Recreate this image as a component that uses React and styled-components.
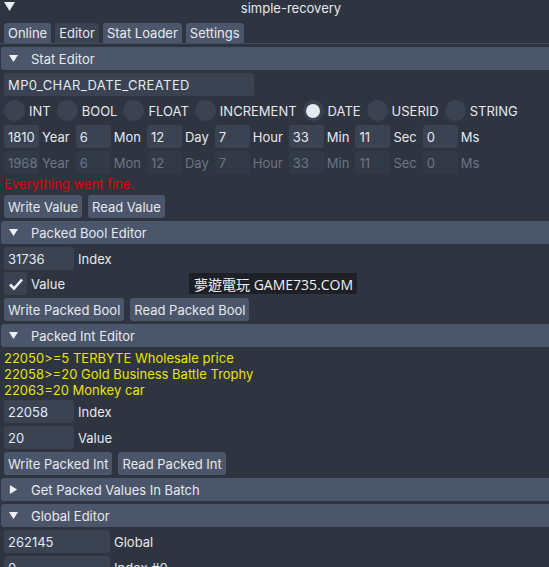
import React from 'react';
import styled, { createGlobalStyle } from 'styled-components';

const GlobalStyle = createGlobalStyle`
  html, body {
    margin: 0;
    padding: 0;
    background: #2e3440;
  }
  body {
    font-family: Inter, "Noto Sans", sans-serif;
    font-size: 13px;
    color: #e5e9f0;
  }
`;

const Window = styled.div`
  position: relative;
  width: 549px;
  height: 567px;
  overflow: hidden;
  background: #2e3440;
`;

const TitleBar = styled.div`
  height: 17px;
  display: flex;
  align-items: flex-start;
  padding: 1px 0 0 4px;
  box-sizing: border-box;
`;

const Title = styled.div`
  flex: 1;
  text-align: center;
  padding-left: 18px;
  line-height: 14px;
`;

const TabBar = styled.div`
  display: flex;
  gap: 4px;
  padding: 0 4px;
  margin-top: 6px;
  height: 20px;
  border-bottom: 1px solid #434c5e;
`;

const Tab = styled.div`
  height: 20px;
  padding: 0 4px;
  display: flex;
  align-items: center;
  border-radius: 3px 3px 0 0;
  background: ${p => (p.$active ? '#3b4252' : '#4c566a')};
`;

const Content = styled.div`
  display: flex;
  flex-direction: column;
  gap: 3px;
  padding: 3px 0 0 4px;
`;

const Header = styled.div`
  height: 23px;
  margin-left: -3px;
  display: flex;
  align-items: center;
  gap: 13px;
  padding-left: 8px;
  border-radius: 3px 0 0 3px;
  background: #4c566a;
`;

const Row = styled.div`
  display: flex;
  align-items: center;
  height: 23px;
  gap: ${p => p.$gap || 6}px;
`;

const Field = styled.div`
  height: 23px;
  width: ${p => p.$w}px;
  box-sizing: border-box;
  padding: 0 4px;
  display: flex;
  align-items: center;
  border-radius: 3px;
  letter-spacing: ${p => p.$ls || 0}px;
  background: ${p => (p.$dim ? '#333a47' : '#3b4252')};
  color: ${p => (p.$dim ? '#6c7586' : '#e5e9f0')};
  flex-shrink: 0;
`;

const Labeled = styled.div`
  display: flex;
  align-items: center;
  gap: ${p => p.$gap || 4}px;
  margin-top: ${p => p.$mt || 0}px;
  color: ${p => (p.$dim ? '#6c7586' : '#e5e9f0')};
`;

const Radio = styled.div`
  width: 21px;
  height: 21px;
  border-radius: 50%;
  background: #3b4252;
  display: flex;
  align-items: center;
  justify-content: center;
  &::after {
    content: '';
    display: ${p => (p.$on ? 'block' : 'none')};
    width: 14px;
    height: 14px;
    border-radius: 50%;
    background: #e5e9f0;
  }
`;

const Check = styled.div`
  width: 23px;
  height: 23px;
  border-radius: 3px;
  background: #3b4252;
  display: flex;
  align-items: center;
  justify-content: center;
`;

const Button = styled.div`
  height: 23px;
  padding: 0 4px;
  display: flex;
  align-items: center;
  border-radius: 3px;
  background: #4c566a;
`;

const Text = styled.div`
  line-height: ${p => p.$lh || 16}px;
  color: ${p => p.$color || '#e5e9f0'};
`;

const Notes = styled.div`
  margin-bottom: -1px;
`;

const Watermark = styled.div`
  position: absolute;
  left: 189px;
  top: 273px;
  height: 21px;
  padding: 0 4px 0 5px;
  display: flex;
  align-items: center;
  background: #1e2028;
  color: #f0f0f0;
  font-family: "Open Sans", "Noto Sans CJK TC", sans-serif;
  font-size: 14px;
`;

const Tri = ({ down = true, size = 9 }) => (
  <svg width={size} height={size} viewBox="0 0 10 10">
    {down ? <polygon points="0,1 10,1 5,9" fill="#eceff4" /> : <polygon points="1,0 9,5 1,10" fill="#eceff4" />}
  </svg>
);

const Section = ({ title, open = true }) => (
  <Header>
    <Tri down={open} />
    <span>{title}</span>
  </Header>
);

const dateParts = [
  ['1810', 'Year'],
  ['6', 'Mon'],
  ['12', 'Day'],
  ['7', 'Hour'],
  ['33', 'Min'],
  ['11', 'Sec'],
  ['0', 'Ms'],
];
const dateParts2 = [
  ['1968', 'Year'],
  ['6', 'Mon'],
  ['12', 'Day'],
  ['7', 'Hour'],
  ['33', 'Min'],
  ['11', 'Sec'],
  ['0', 'Ms'],
];

const types = ['INT', 'BOOL', 'FLOAT', 'INCREMENT', 'DATE', 'USERID', 'STRING'];

const DateRow = ({ parts, dim }) => (
  <Row $gap={6}>
    {parts.map(([v, l]) => (
      <Labeled key={l} $dim={dim} $gap={3}>
        <Field $w={35} $dim={dim}>{v}</Field>
        <span>{l}</span>
      </Labeled>
    ))}
  </Row>
);

export default function App() {
  return (
    <Window>
      <GlobalStyle />
      <TitleBar>
        <Tri size={11} />
        <Title>simple-recovery</Title>
      </TitleBar>
      <TabBar>
        <Tab>Online</Tab>
        <Tab $active>Editor</Tab>
        <Tab>Stat Loader</Tab>
        <Tab>Settings</Tab>
      </TabBar>
      <Content>
        <Section title="Stat Editor" />
        <Row>
          <Field $w={250} $ls={0.4}>MP0_CHAR_DATE_CREATED</Field>
        </Row>
        <Row $gap={6}>
          {types.map(t => (
            <Labeled key={t}>
              <Radio $on={t === 'DATE'} />
              <span>{t}</span>
            </Labeled>
          ))}
        </Row>
        <DateRow parts={dateParts} />
        <DateRow parts={dateParts2} dim />
        <Text $color="#e00000" $lh={15}>Everything went fine.</Text>
        <Row $gap={6}>
          <Button>Write Value</Button>
          <Button>Read Value</Button>
        </Row>

        <Section title="Packed Bool Editor" />
        <Labeled>
          <Field $w={70}>31736</Field>
          <span>Index</span>
        </Labeled>
        <Labeled $mt={-1}>
          <Check>
            <svg width="16" height="16" viewBox="0 0 16 16">
              <polyline points="2,8.5 6,12.5 14,3.5" fill="none" stroke="#eceff4" strokeWidth="2.6" />
            </svg>
          </Check>
          <span>Value</span>
        </Labeled>
        <Row $gap={6}>
          <Button>Write Packed Bool</Button>
          <Button>Read Packed Bool</Button>
        </Row>

        <Section title="Packed Int Editor" />
        <Notes>
          <Text $color="#e6e600">22050&gt;=5 TERBYTE Wholesale price</Text>
          <Text $color="#e6e600">22058&gt;=20 Gold Business Battle Trophy</Text>
          <Text $color="#e6e600">22063=20 Monkey car</Text>
        </Notes>
        <Labeled>
          <Field $w={70}>22058</Field>
          <span>Index</span>
        </Labeled>
        <Labeled>
          <Field $w={70}>20</Field>
          <span>Value</span>
        </Labeled>
        <Row $gap={6}>
          <Button>Write Packed Int</Button>
          <Button>Read Packed Int</Button>
        </Row>

        <Section title="Get Packed Values In Batch" open={false} />
        <Section title="Global Editor" />
        <Labeled>
          <Field $w={106}>262145</Field>
          <span>Global</span>
        </Labeled>
        <Labeled>
          <Field $w={106}>0</Field>
          <span>Index #0</span>
        </Labeled>
      </Content>
      <Watermark>夢遊電玩 GAME735.COM</Watermark>
    </Window>
  );
}
